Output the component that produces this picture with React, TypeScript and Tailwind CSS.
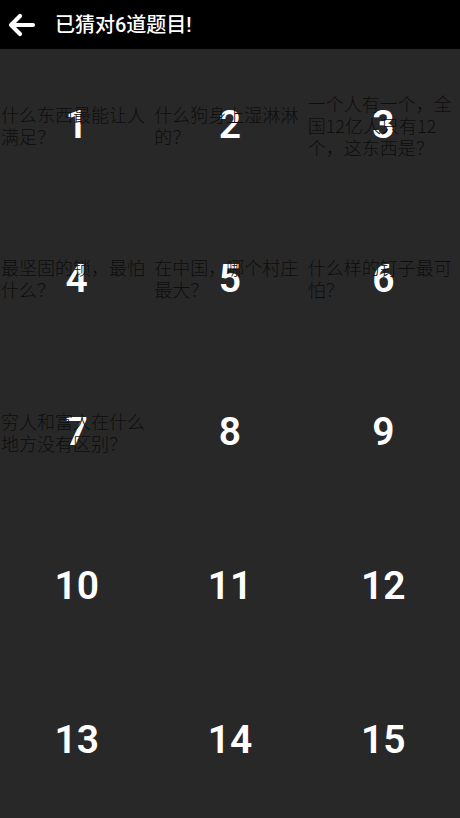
import React from "react";

const items: { n: number; lines: string[] }[] = [
  { n: 1, lines: ["什么东西最能让人", "满足？"] },
  { n: 2, lines: ["什么狗身上湿淋淋", "的？"] },
  { n: 3, lines: ["一个人有一个，全", "国12亿人只有12", "个，这东西是？"] },
  { n: 4, lines: ["最坚固的锁，最怕", "什么？"] },
  { n: 5, lines: ["在中国，哪个村庄", "最大？"] },
  { n: 6, lines: ["什么样的钉子最可", "怕？"] },
  { n: 7, lines: ["穷人和富人在什么", "地方没有区别？"] },
  { n: 8, lines: [] },
  { n: 9, lines: [] },
  { n: 10, lines: [] },
  { n: 11, lines: [] },
  { n: 12, lines: [] },
  { n: 13, lines: [] },
  { n: 14, lines: [] },
  { n: 15, lines: [] },
];

export default function App() {
  return (
    <div
      className="w-[460px] h-[818px] overflow-hidden bg-[#282828] flex flex-col"
      style={{ fontFamily: '"Noto Sans CJK SC", Roboto, sans-serif' }}
    >
      <div className="h-[49px] bg-black flex items-center shrink-0">
        <svg width="28" height="24" viewBox="0 0 28 24" className="ml-[8px]">
          <path
            d="M12 3 L3 12 L12 21 M3 12 H25"
            fill="none"
            stroke="white"
            strokeWidth="4.2"
            strokeLinecap="round"
            strokeLinejoin="round"
          />
        </svg>
        <span
          className="ml-[19px] text-white text-[20px] leading-none font-medium"
          style={{ fontFamily: 'Roboto, "Noto Sans CJK SC", sans-serif' }}
        >
          已猜对6道题目!
        </span>
      </div>
      <div className="grid grid-cols-3">
        {items.map((it) => (
          <div key={it.n} className="relative h-[153.6px] flex items-center justify-center">
            <span
              className="text-white font-semibold text-[39px] leading-none"
              style={{ fontFamily: 'Roboto, "Liberation Sans", sans-serif' }}
            >
              {it.n}
            </span>
            {it.lines.length > 0 && (
              <div className="absolute inset-0 flex flex-col justify-center pl-[1px] pb-[2px] text-[#0e0e0e] text-[18px] leading-[22px] font-light whitespace-nowrap">
                {it.lines.map((l, i) => (
                  <div key={i}>{l}</div>
                ))}
              </div>
            )}
          </div>
        ))}
      </div>
    </div>
  );
}
